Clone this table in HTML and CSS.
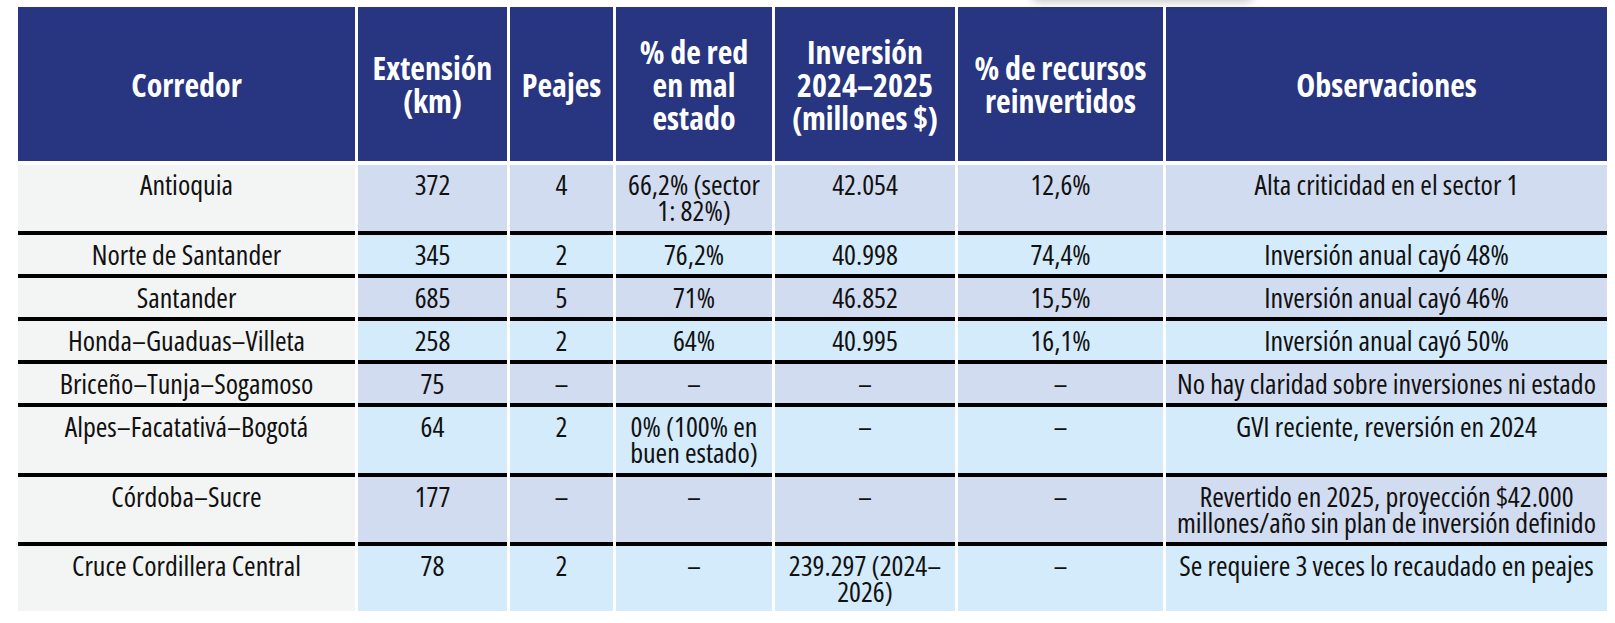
FILE: index.html
```html
<!DOCTYPE html>
<html lang="es">
<head>
<meta charset="utf-8">
<title>Corredores</title>
<link rel="stylesheet" href="styles.css">
</head>
<body>
<div class="shadow-bar"></div>
<table class="grid">
  <colgroup>
    <col class="w1"><col class="w2"><col class="w3"><col class="w4"><col class="w5"><col class="w6"><col class="w7">
  </colgroup>
  <thead>
    <tr class="head">
      <th>Corredor</th>
      <th>Extensión<br>(km)</th>
      <th>Peajes</th>
      <th>% de red<br>en mal<br>estado</th>
      <th>Inversión<br>2024–2025<br>(millones $)</th>
      <th>% de recursos<br>reinvertidos</th>
      <th>Observaciones</th>
    </tr>
  </thead>
  <tbody>
    <tr class="odd first roomy">
      <td>Antioquia</td><td>372</td><td>4</td><td>66,2% (sector<br>1: 82%)</td><td>42.054</td><td>12,6%</td><td>Alta criticidad en el sector 1</td>
    </tr>
    <tr class="even">
      <td>Norte de Santander</td><td>345</td><td>2</td><td>76,2%</td><td>40.998</td><td>74,4%</td><td>Inversión anual cayó 48%</td>
    </tr>
    <tr class="odd">
      <td>Santander</td><td>685</td><td>5</td><td>71%</td><td>46.852</td><td>15,5%</td><td>Inversión anual cayó 46%</td>
    </tr>
    <tr class="even">
      <td>Honda–Guaduas–Villeta</td><td>258</td><td>2</td><td>64%</td><td>40.995</td><td>16,1%</td><td>Inversión anual cayó 50%</td>
    </tr>
    <tr class="odd">
      <td>Briceño–Tunja–Sogamoso</td><td>75</td><td>–</td><td>–</td><td>–</td><td>–</td><td>No hay claridad sobre inversiones ni estado</td>
    </tr>
    <tr class="even roomy">
      <td>Alpes–Facatativá–Bogotá</td><td>64</td><td>2</td><td>0% (100% en<br>buen estado)</td><td>–</td><td>–</td><td>GVI reciente, reversión en 2024</td>
    </tr>
    <tr class="odd">
      <td>Córdoba–Sucre</td><td>177</td><td>–</td><td>–</td><td>–</td><td>–</td><td>Revertido en 2025, proyección $42.000<br>millones/año sin plan de inversión definido</td>
    </tr>
    <tr class="even">
      <td>Cruce Cordillera Central</td><td>78</td><td>2</td><td>–</td><td>239.297 (2024–<br>2026)</td><td>–</td><td>Se requiere 3 veces lo recaudado en peajes</td>
    </tr>
  </tbody>
</table>
</body>
</html>
```

FILE: styles.css
```css
html, body {
  margin: 0;
  padding: 0;
  background: #ffffff;
}

body {
  position: relative;
  font-family: "Open Sans", "Noto Sans", "Liberation Sans", sans-serif;
  font-stretch: 75%;
  color: #111111;
  overflow: hidden;
}

.shadow-bar {
  position: absolute;
  left: 1030px;
  top: -20px;
  width: 225px;
  height: 20px;
  border-radius: 10px;
  box-shadow: 0 2px 8px rgba(0, 0, 0, 0.22);
  background: #ffffff;
}

.grid {
  margin: 7px 0 0 15px;
  border-collapse: separate;
  border-spacing: 3px 0;
  table-layout: fixed;
  width: 1595px;
}

.w1 { width: 337px; }
.w2 { width: 149px; }
.w3 { width: 103px; }
.w4 { width: 156px; }
.w5 { width: 180px; }
.w6 { width: 205px; }
.w7 { width: 441px; }

.head {
  height: 154px;
}

.head th {
  background: #283580;
  color: #ffffff;
  font-weight: 700;
  font-size: 32px;
  line-height: 33px;
  padding: 0;
  text-align: center;
  vertical-align: middle;
}

tbody td {
  font-size: 28px;
  line-height: 26px;
  padding: 6px 0 7px;
  text-align: center;
  vertical-align: top;
  border-top: 4px solid #000000;
  white-space: nowrap;
}

tbody tr.roomy td {
  padding-bottom: 8px;
}

tbody tr.first td {
  border-top-color: #ffffff;
}

tbody tr.odd td {
  background: #d2dcf0;
}

tbody tr.even td {
  background: #d4ebfb;
}

tbody tr td:first-child {
  background: #f3f4f4;
}
```
